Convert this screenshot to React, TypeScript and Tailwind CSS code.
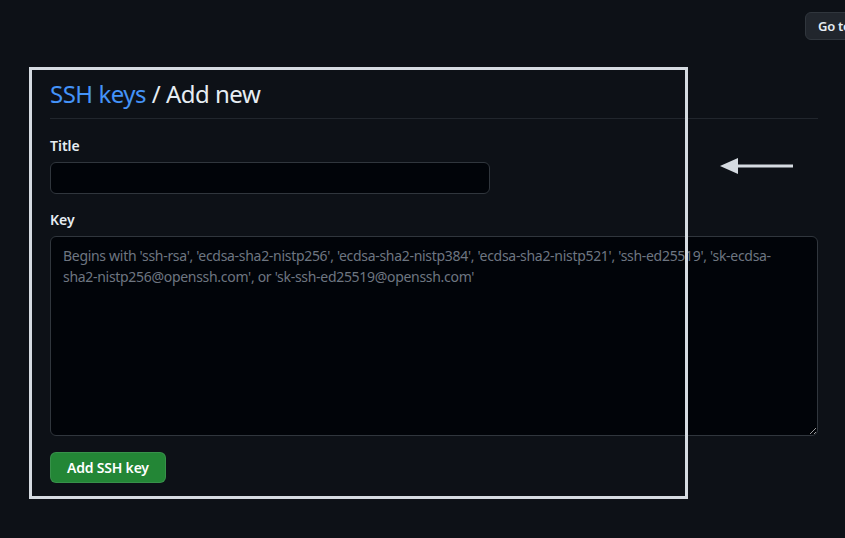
const keyHint =
  "Begins with 'ssh-rsa', 'ecdsa-sha2-nistp256', 'ecdsa-sha2-nistp384', 'ecdsa-sha2-nistp521', 'ssh-ed25519', 'sk-ecdsa-sha2-nistp256@openssh.com', or 'sk-ssh-ed25519@openssh.com'";

const ArrowMark = () => (
  <svg width="80" height="22" viewBox="0 0 80 22" className="absolute left-[716px] top-[155px]">
    <polygon points="4,11 22,3 22,19" fill="#d5dbe1" />
    <rect x="21" y="9.5" width="56" height="3" fill="#d5dbe1" />
  </svg>
);

const App = () => {
  return (
    <div className="relative w-full h-[538px] overflow-hidden bg-[#0d1117] text-[#e6edf3] font-['Noto_Sans',sans-serif]">
      <div className="flex pt-3 pl-[805px]">
        <button className="shrink-0 whitespace-nowrap h-7 px-3 rounded-md border border-[#30363d] bg-[#21262d] text-[13px] font-semibold tracking-[-0.3px] text-[#e6edf3] leading-none">
          Go to file
        </button>
      </div>

      <main className="ml-[50px] w-[768px] mt-9">
        <h1 className="text-2xl leading-9 font-normal tracking-[-0.5px] pb-1.5 border-b border-[#21262d]">
          <a className="text-[#4493f8]">SSH keys</a> / Add new
        </h1>

        <form className="mt-4" onSubmit={(e) => e.preventDefault()}>
          <label className="block text-sm font-semibold leading-[21px] mb-1.5">Title</label>
          <input type="text" className="block w-[440px] h-8 px-3 rounded-md border border-[#30363d] bg-[#010409] text-sm outline-none" />

          <label className="block mt-[15px] text-sm font-semibold leading-[21px] mb-1.5">Key</label>
          <textarea
            placeholder={keyHint}
            className="block w-full h-[200px] px-3 py-2 rounded-md border border-[#30363d] bg-[#010409] text-sm tracking-[-0.3px] leading-[21px] outline-none placeholder:text-[#6e7681]"
          />

          <button className="mt-4 h-[31px] px-4 rounded-md border border-[#f0f6fc1a] bg-[#238636] text-sm font-semibold tracking-[-0.2px] text-white">
            Add SSH key
          </button>
        </form>
      </main>

      {/* annotation overlay */}
      <div className="absolute left-[29px] top-[67px] w-[659px] h-[432px] border-[3px] border-[#d5dbe1] pointer-events-none" />
      <ArrowMark />
    </div>
  );
};

export default App;
